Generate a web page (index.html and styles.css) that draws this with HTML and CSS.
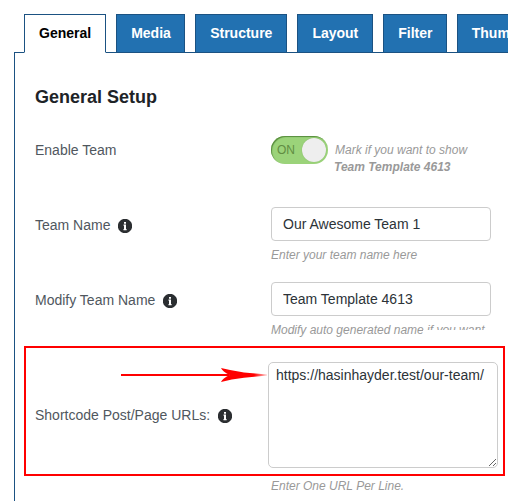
FILE: index.html
```html
<!DOCTYPE html>
<html lang="en">
<head>
<meta charset="utf-8">
<title>General Setup</title>
<link rel="stylesheet" href="styles.css">
</head>
<body>
<svg class="defs" width="0" height="0"><symbol id="info" viewBox="0 0 14 14"><circle cx="7" cy="7" r="7.200" fill="#2b2e31"/><path d="M6 3h2v1.700H6zM5.500 5.600H8V10h.6v1.200H5.500V10H6V6.800h-.5z" fill="#fff"/></symbol></svg>
<nav class="tabs">
  <a class="tab active">General</a>
  <a class="tab media">Media</a>
  <a class="tab">Structure</a>
  <a class="tab">Layout</a>
  <a class="tab filter">Filter</a>
  <a class="tab">Thumbnails</a>
</nav>
<main class="panel">
  <h2 class="title">General Setup</h2>
  <div class="row row-enable">
    <div class="label"><span class="t-enable">Enable Team</span></div>
    <div class="field toggle-field">
      <span class="toggle"><span class="on">ON</span><span class="knob"></span></span>
      <span class="hint"><span class="t-mark">Mark if you want to show</span><br><b>Team Template 4613</b></span>
    </div>
  </div>
  <div class="row row-input">
    <div class="label"><span>Team Name</span><svg class="info"><use href="#info"/></svg></div>
    <div class="field">
      <input class="input" type="text" value="Our Awesome Team 1">
      <div class="hint below">Enter your team name here</div>
    </div>
  </div>
  <div class="row row-input">
    <div class="label"><span>Modify Team Name</span><svg class="info"><use href="#info"/></svg></div>
    <div class="field">
      <input class="input" type="text" value="Team Template 4613">
      <div class="hint below cut">Modify auto generated name if you want</div>
    </div>
  </div>
  <div class="row row-area">
    <div class="label"><span>Shortcode Post/Page URLs:</span><svg class="info"><use href="#info"/></svg></div>
    <div class="field">
      <textarea class="area" spellcheck="false">https://hasinhayder.test/our-team/</textarea>
      <div class="hint area-hint">Enter One URL Per Line.</div>
    </div>
  </div>
</main>
<div class="highlight">
  <svg class="arrow" width="148" height="16" viewBox="0 0 148 16">
    <defs><linearGradient id="fade" gradientUnits="userSpaceOnUse" x1="134" y1="0" x2="147" y2="0"><stop offset="0" stop-color="#f00"/><stop offset="1" stop-color="#f00" stop-opacity=".2"/></linearGradient></defs>
    <path d="M1 7h108v2H1z" fill="#f00"/>
    <path d="M101 1Q112 3.8 124 5.4L147 7.5V8.5L124 10.8Q111 12.3 101 15Q102.500 11.500 109.500 8Q102.500 4.500 101 1z" fill="url(#fade)"/>
  </svg>
</div>
</body>
</html>
```
FILE: styles.css
```css
* { box-sizing: border-box; }
html, body { overflow: hidden; }
body {
  position: relative;
  width: 508px;
  height: 501px;
  margin: 0;
  padding: 14px 0 0 14px;
  background: #fff;
  font-family: "Liberation Sans", Arial, sans-serif;
  font-size: 14px;
  color: #50575e;
}
.defs { position: absolute; }
.tabs {
  display: flex;
  gap: 10px;
  height: 39px;
  padding-left: 10px;
  border-bottom: 1px solid #1b5282;
  overflow: hidden;
  overflow: clip;
  overflow-clip-margin: 1px;
}
.tab {
  flex: none;
  height: 39px;
  padding: 0 14px;
  border: 1px solid #1b5282;
  background: #2271b1;
  color: #fff;
  font-weight: 700;
  line-height: 37px;
}
.tab.active { background: #fff; border-bottom-color: #fff; color: #000; }
.tab.media { width: 69px; }
.tab.filter { width: 63.5px; }
.panel {
  height: 448px;
  padding: 34px 0 0 20px;
  border-left: 1px solid #1b5282;
}
.title {
  margin: 0;
  height: 49px;
  font-size: 18px;
  line-height: 21px;
  color: #1d2327;
}
.row { display: grid; grid-template-columns: 236px 1fr; }
.row-enable { height: 71px; }
.row-input { height: 75px; }
.label { display: flex; height: 28px; line-height: 28px; white-space: nowrap; }
.row-input .label { height: 36px; line-height: 36px; }
.row-area .label { margin-top: 44px; }
.info { width: 14px; height: 14px; margin: 8px 0 0 8px; overflow: visible; }
.row-input .info { margin-top: 12px; }
.hint { font-size: 12px; line-height: 17px; font-style: italic; color: #999; white-space: nowrap; }
.toggle-field { display: flex; gap: 6px; }
.toggle-field .hint { padding-top: 6px; }
.t-mark { padding-left: 1px; }
.toggle {
  display: flex;
  justify-content: space-between;
  flex: none;
  width: 57px;
  height: 28px;
  padding: 2px 2px 2px 6px;
  border-radius: 14px;
  background: #9bd37a;
  box-shadow: inset 1px 1px 1px #568b3c;
}
.on { font-size: 12px; line-height: 24px; color: #618d42; }
.knob { width: 24px; height: 24px; border-radius: 50%; background: #eee; box-shadow: 0 0 1px #7eae65; }
.input, .area {
  display: block;
  margin: 0;
  border: 1px solid #ccc;
  background: #fff;
  color: #2c3338;
  font-family: inherit;
  outline: none;
}
.input { width: 220px; height: 34px; padding: 0 11px; border-radius: 4px; font-size: 14px; }
.below { margin-top: 6px; }
.cut { position: relative; }
.cut::after {
  content: "";
  position: absolute;
  left: 152px;
  top: 8px;
  width: 80px;
  height: 10px;
  background: #fff;
}
.area {
  width: 230px;
  height: 106px;
  margin: 5px 0 0 -3px;
  padding: 3px 7px;
  border-radius: 5px;
  font-size: 14px;
  line-height: 18px;
  resize: both;
}
.area-hint { margin-top: 10px; }
.highlight {
  position: absolute;
  left: 24px;
  top: 346px;
  width: 481px;
  height: 130px;
  border: 2px solid #f00;
  pointer-events: none;
}
.arrow { position: absolute; left: 94px; top: 19px; }
```
